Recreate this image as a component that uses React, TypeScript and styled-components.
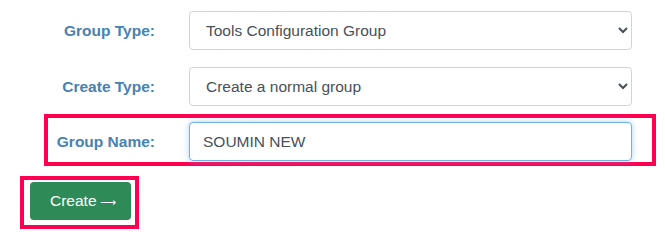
import React from "react";
import styled, { createGlobalStyle } from "styled-components";

const Global = createGlobalStyle`
  html, body { margin: 0; padding: 0; background: #ffffff; }
  body { font-family: "Liberation Sans", Arial, sans-serif; }
`;

const Form = styled.form`
  display: flex;
  flex-direction: column;
  gap: 4px;
  padding-top: 3px;
  width: 665px;
`;

const Row = styled.div<{ $highlight?: boolean }>`
  display: grid;
  grid-template-columns: 107px 443px;
  column-gap: 34px;
  align-items: center;
  margin-left: 44px;
  margin-top: ${(p) => (p.$highlight ? "-1px" : "0")};
  width: 594px;
  padding: 4px 10px 1px 0;
  border: 4px solid ${(p) => (p.$highlight ? "#ff0050" : "transparent")};
`;

const Label = styled.label`
  text-align: right;
  font-size: 15.5px;
  font-weight: 700;
  color: #4682b4;
  white-space: nowrap;
`;

const Select = styled.select`
  height: 39px;
  width: 100%;
  box-sizing: border-box;
  padding: 0 8px 0 12px;
  font-family: "Liberation Sans", Arial, sans-serif;
  font-size: 15.5px;
  color: #495057;
  background: #ffffff;
  border: 1px solid #ced4da;
  border-radius: 4px;
  outline: none;
`;

const Input = styled.input`
  height: 39px;
  width: 100%;
  box-sizing: border-box;
  padding: 0 13px;
  font-family: "Liberation Sans", Arial, sans-serif;
  font-size: 15.5px;
  color: #495057;
  background: #ffffff;
  border: 1px solid #6fb2ea;
  border-radius: 4px;
  outline: none;
  box-shadow: 0 0 6px rgba(102, 175, 233, 0.55);
`;

const ButtonFrame = styled.div`
  align-self: flex-start;
  margin: 6px 0 0 20px;
  padding: 2px 4px 5px 6px;
  border: 4px solid #ff0050;
`;

const Button = styled.button`
  display: flex;
  align-items: center;
  gap: 4px;
  height: 38px;
  width: 101px;
  box-sizing: border-box;
  padding: 0 0 0 20px;
  border: none;
  border-radius: 4px;
  background: #2e8b57;
  color: #ffffff;
  font-family: "Liberation Sans", Arial, sans-serif;
  font-size: 15.5px;
  cursor: pointer;
  white-space: nowrap;
`;

const Arrow = styled.span`
  font-family: "DejaVu Sans", sans-serif;
  font-size: 11px;
  font-weight: 400;
  line-height: 1;
  padding-top: 2px;
`;

export default function App() {
  return (
    <>
      <Global />
      <Form onSubmit={(e) => e.preventDefault()}>
        <Row>
          <Label htmlFor="groupType">Group Type:</Label>
          <Select id="groupType" defaultValue="tools">
            <option value="tools">Tools Configuration Group</option>
          </Select>
        </Row>
        <Row>
          <Label htmlFor="createType">Create Type:</Label>
          <Select id="createType" defaultValue="normal">
            <option value="normal">Create a normal group</option>
          </Select>
        </Row>
        <Row $highlight>
          <Label htmlFor="groupName">Group Name:</Label>
          <Input id="groupName" defaultValue="SOUMIN NEW" />
        </Row>
        <ButtonFrame>
          <Button type="submit">
            Create<Arrow>⟶</Arrow>
          </Button>
        </ButtonFrame>
      </Form>
    </>
  );
}
